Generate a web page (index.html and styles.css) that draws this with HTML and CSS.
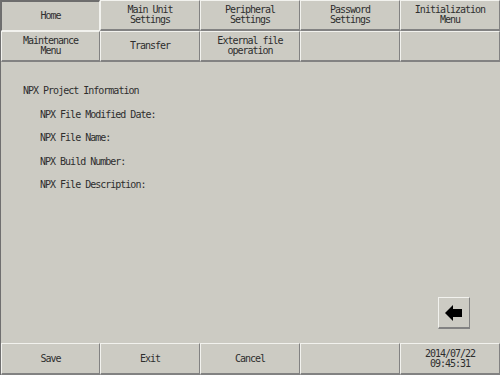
FILE: index.html
```html
<!DOCTYPE html>
<html>
<head>
<meta charset="utf-8">
<link rel="stylesheet" href="styles.css">
</head>
<body>
<div class="screen">
  <div class="tabs">
    <div class="btn pressed">Home</div>
    <div class="btn">Main Unit<br>Settings</div>
    <div class="btn">Peripheral<br>Settings</div>
    <div class="btn">Password<br>Settings</div>
    <div class="btn">Initialization<br>Menu</div>
    <div class="btn">Maintenance<br>Menu</div>
    <div class="btn">Transfer</div>
    <div class="btn">External file<br>operation</div>
    <div class="btn"></div>
    <div class="btn"></div>
  </div>
  <div class="content">
    <div class="info">
      <div class="line">NPX Project Information</div>
      <div class="line sub">NPX File Modified Date:</div>
      <div class="line sub">NPX File Name:</div>
      <div class="line sub">NPX Build Number:</div>
      <div class="line sub">NPX File Description:</div>
    </div>
    <div class="backrow">
      <div class="btn back">
        <svg width="18" height="16" viewBox="0 0 18 16"><polygon points="0,8 8,0 8,4 17,4 17,12 8,12 8,16" fill="#000"/></svg>
      </div>
    </div>
  </div>
  <div class="footer">
    <div class="btn">Save</div>
    <div class="btn">Exit</div>
    <div class="btn">Cancel</div>
    <div class="btn"></div>
    <div class="btn">2014/07/22<br>09:45:31</div>
  </div>
</div>
</body>
</html>
```
FILE: styles.css
```css
html, body {
  margin: 0;
  padding: 0;
  background: #cccbc3;
}
.screen {
  width: 500px;
  height: 375px;
  display: flex;
  flex-direction: column;
  box-sizing: border-box;
  border-left: 1px solid #6f6f6f;
  font-family: "DejaVu Sans Mono", "Liberation Mono", monospace;
  font-size: 10px;
  letter-spacing: -1px;
  color: #2e2e2e;
}
.tabs {
  display: grid;
  grid-template-columns: 99px repeat(4, 100px);
  grid-template-rows: 31px 31px;
}
.btn {
  box-sizing: border-box;
  display: flex;
  align-items: center;
  justify-content: center;
  text-align: center;
  line-height: 10px;
  background: #cccbc3;
  border-top: 1px solid #f2f2ee;
  border-left: 1px solid #f2f2ee;
  border-right: 1px solid #828282;
  border-bottom: 2px solid #828282;
}
.btn.pressed {
  border-top: 2px solid #6d6d6d;
  border-left: 1px solid #6d6d6d;
  border-right: 1px solid #f2f2ee;
  border-bottom: 1px solid #f2f2ee;
}
.content {
  flex: 1;
  display: flex;
  flex-direction: column;
}
.info {
  padding: 24px 0 0 22px;
}
.line {
  height: 23.6px;
  line-height: 10px;
}
.line.sub {
  padding-left: 17px;
}
.backrow {
  margin-top: auto;
  display: flex;
  justify-content: flex-end;
  padding: 0 30px 14px 0;
}
.btn.back {
  width: 32px;
  height: 32px;
}
.footer {
  display: grid;
  grid-template-columns: 99px repeat(4, 100px);
  height: 32px;
}
```
